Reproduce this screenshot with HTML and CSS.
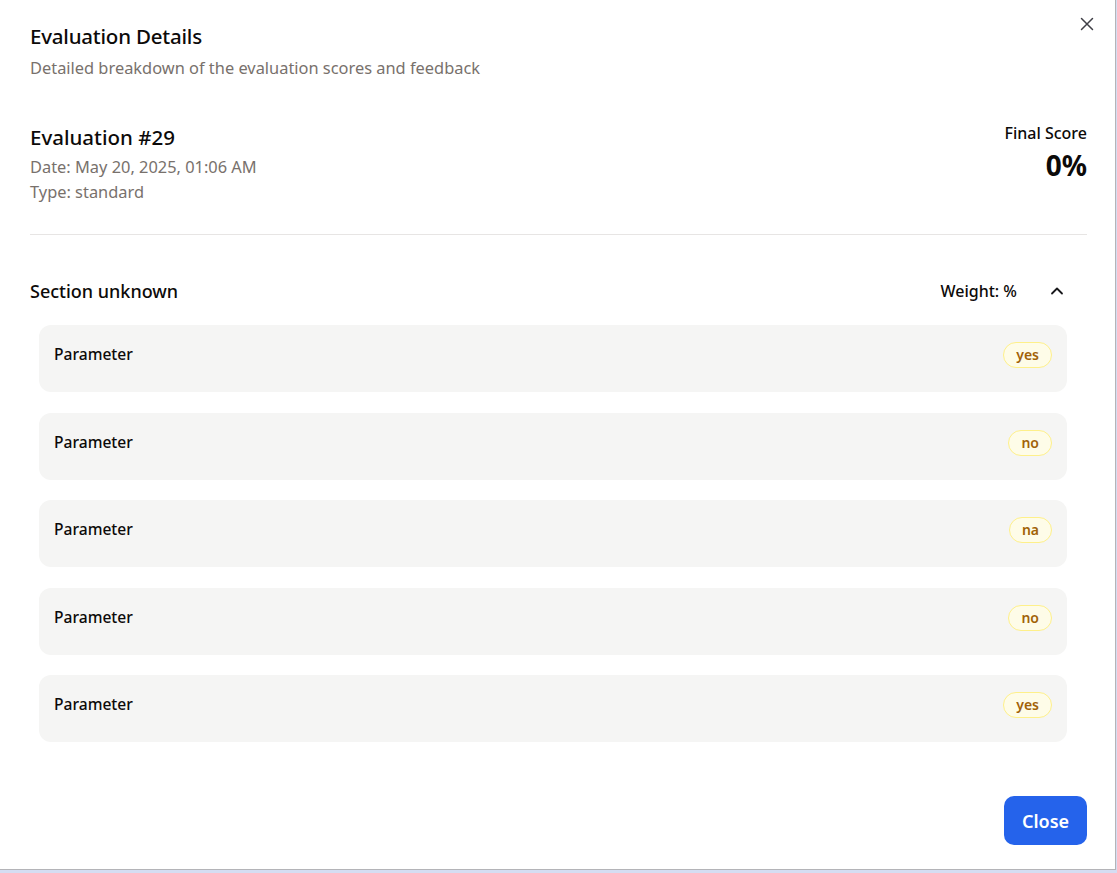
FILE: index.html
```html
<!DOCTYPE html>
<html lang="en">
<head>
<meta charset="utf-8">
<title>Evaluation Details</title>
<link rel="stylesheet" href="styles.css">
</head>
<body>
<div class="modal">
  <button class="close-x" aria-label="Close">
    <svg width="14" height="14" viewBox="0 0 14 14"><path d="M1.5 1.5 L12.5 12.5 M12.5 1.5 L1.5 12.5" stroke="#3f3f46" stroke-width="1.5" stroke-linecap="round" fill="none"/></svg>
  </button>
  <header class="head">
    <h1 class="title">Evaluation Details</h1>
    <p class="subtitle">Detailed breakdown of the evaluation scores and feedback</p>
  </header>
  <section class="summary">
    <div class="meta">
      <h2 class="eval-title">Evaluation #29</h2>
      <div class="meta-line">Date: May 20, 2025, 01:06 AM</div>
      <div class="meta-line">Type: standard</div>
    </div>
    <div class="score">
      <div class="score-label">Final Score</div>
      <div class="score-value">0%</div>
    </div>
  </section>
  <section class="section">
    <div class="section-row">
      <div class="section-name">Section unknown</div>
      <div class="section-right">
        <span class="weight">Weight: %</span>
        <svg class="chev" width="14" height="10" viewBox="0 0 14 10"><path d="M2 7.5 L7 2.5 L12 7.5" stroke="#18181b" stroke-width="1.8" stroke-linecap="round" stroke-linejoin="round" fill="none"/></svg>
      </div>
    </div>
    <div class="params">
      <div class="param"><span class="pname">Parameter</span><span class="badge">yes</span></div>
      <div class="param"><span class="pname">Parameter</span><span class="badge">no</span></div>
      <div class="param"><span class="pname">Parameter</span><span class="badge">na</span></div>
      <div class="param"><span class="pname">Parameter</span><span class="badge">no</span></div>
      <div class="param"><span class="pname">Parameter</span><span class="badge">yes</span></div>
    </div>
  </section>
  <footer class="foot">
    <button class="close-btn">Close</button>
  </footer>
</div>
</body>
</html>
```

FILE: styles.css
```css
* { box-sizing: border-box; }
html, body { margin: 0; padding: 0; }
body {
  background: #d5ddf2;
  font-family: "Noto Sans", "Open Sans", sans-serif;
  color: #0c0a09;
  height: 873px;
  overflow: hidden;
}
.modal {
  position: relative;
  width: 1116px;
  height: 870px;
  background: #fff;
  border-right: 1px solid #b4b4b8;
  border-bottom: 1px solid #b4b4b8;
  padding: 22px 28px 24px 30px;
  display: flex;
  flex-direction: column;
}
.close-x {
  position: absolute;
  top: 17px;
  right: 21px;
  width: 14px;
  height: 14px;
  padding: 0;
  border: 0;
  background: none;
  display: flex;
}
.title {
  margin: 0;
  font-size: 20.5px;
  line-height: 28px;
  font-weight: 500;
  letter-spacing: -0.2px;
}
.subtitle {
  margin: 6px 0 0;
  font-size: 16.4px;
  line-height: 24px;
  color: #78716c;
}
.summary {
  margin-top: 43px;
  display: flex;
  justify-content: space-between;
  align-items: flex-start;
  padding-bottom: 30px;
  border-bottom: 1px solid #e7e5e4;
}
.eval-title {
  margin: 0 0 3px;
  font-size: 20.5px;
  line-height: 28px;
  font-weight: 500;
}
.meta-line {
  font-size: 16.4px;
  line-height: 25px;
  color: #78716c;
}
.score {
  margin-top: -2px;
  text-align: right;
}
.score-label {
  font-size: 16px;
  line-height: 24px;
  font-weight: 500;
}
.score-value {
  margin-top: 2px;
  font-size: 28px;
  line-height: 36px;
  font-weight: 700;
}
.section-row {
  margin-top: 42px;
  display: flex;
  justify-content: space-between;
  align-items: center;
  height: 28px;
}
.section-name {
  font-size: 18px;
  font-weight: 500;
}
.section-right {
  display: flex;
  align-items: center;
}
.weight {
  font-size: 16px;
  font-weight: 500;
}
.chev {
  margin-left: 33px;
  margin-right: 23px;
}
.params {
  margin: 20px 20px 0 9px;
  display: flex;
  flex-direction: column;
  gap: 20.5px;
}
.param {
  background: #f5f5f4;
  border-radius: 12px;
  height: 67px;
  padding: 17px 15px 0;
  display: flex;
  justify-content: space-between;
  align-items: flex-start;
}
.pname {
  font-size: 15.6px;
  font-weight: 500;
  line-height: 24px;
}
.badge {
  margin-top: 0;
  height: 26px;
  padding: 0 12px;
  border-radius: 13px;
  background: #fefce8;
  border: 1px solid #fef08a;
  color: #a16207;
  font-size: 14px;
  font-weight: 600;
  line-height: 24px;
}
.foot {
  margin-top: auto;
  display: flex;
  justify-content: flex-end;
}
.close-btn {
  width: 83px;
  height: 49px;
  border: 0;
  border-radius: 10px;
  background: #2563eb;
  color: #fff;
  font-family: inherit;
  font-size: 18px;
  font-weight: 600;
}
```
